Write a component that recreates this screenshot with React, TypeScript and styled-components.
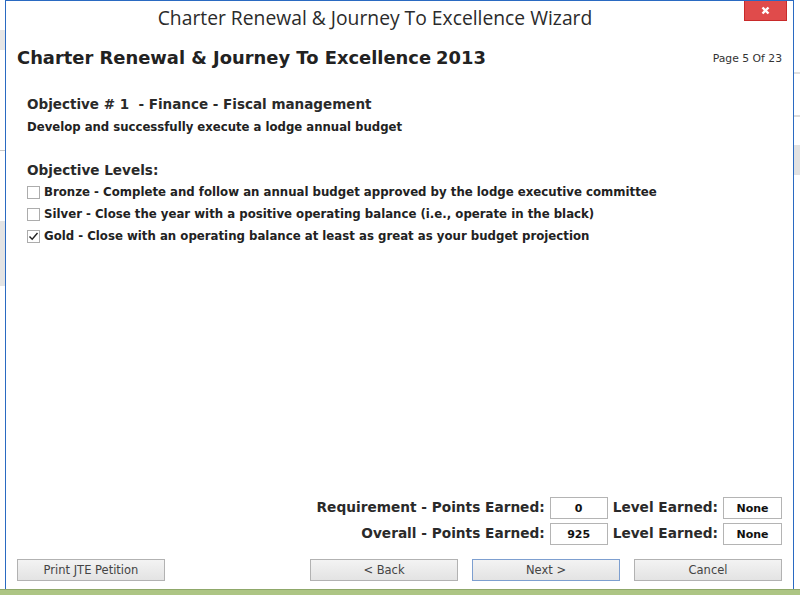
import React from "react";
import styled, { createGlobalStyle } from "styled-components";

const Global = createGlobalStyle`
  html, body { margin: 0; padding: 0; background: #ffffff; }
  body { font-family: "DejaVu Sans", Verdana, sans-serif; color: #222; }
  * { box-sizing: border-box; }
`;

const Screen = styled.div`
  width: 800px;
  height: 595px;
  display: flex;
  flex-direction: column;
  overflow: hidden;
`;

const Desk = styled.div`
  flex: 1;
  display: flex;
  min-height: 0;
`;

const Backdrop = styled.div<{ $w: number }>`
  width: ${(p) => p.$w}px;
  display: flex;
  flex-direction: column;
  background: #fff;
`;

const BackBand = styled.div<{ $h: number; $c: string }>`
  height: ${(p) => p.$h}px;
  background: ${(p) => p.$c};
`;

const Taskbar = styled.div`
  height: 6px;
  background: #adc584;
  border-top: 1px solid #8fa86a;
`;

const Window = styled.div`
  flex: 1;
  display: flex;
  flex-direction: column;
  background: #fff;
  border: 1px solid #2a6ac2;
  border-bottom: none;
`;

const TitleBar = styled.div`
  height: 37px;
  display: flex;
  align-items: flex-start;
  padding-right: 6px;
`;

const TitleText = styled.div`
  flex: 1;
  text-align: center;
  font-family: "Open Sans", "Noto Sans", sans-serif;
  font-size: 19.3px;
  line-height: 22px;
  padding-top: 6px;
  color: #2b2b2b;
`;

const CloseButton = styled.div`
  width: 43px;
  height: 20px;
  background: #e04b4b;
  border: 1px solid #c82a2a;
  border-top: none;
  display: flex;
  align-items: center;
  justify-content: center;
`;

const HeadRow = styled.div`
  height: 39px;
  display: flex;
  align-items: center;
  justify-content: space-between;
  padding: 0 11px;
`;

const Heading = styled.div`
  font-size: 17.9px;
  font-weight: bold;
  color: #222;
  display: flex;
  gap: 5px;
`;

const PageLabel = styled.div`
  font-size: 10.8px;
  color: #333;
  padding-top: 2px;
`;

const Content = styled.div`
  padding: 17px 21px 0;
  display: flex;
  flex-direction: column;
`;

const ObjectiveTitle = styled.div`
  font-size: 13.5px;
  font-weight: bold;
  line-height: 20px;
  color: #2a2a2a;
  white-space: pre;
`;

const Description = styled.div`
  font-size: 11.7px;
  font-weight: bold;
  line-height: 18px;
  margin-top: 4px;
  color: #222;
`;

const LevelsHeader = styled.div`
  font-size: 13.6px;
  font-weight: bold;
  line-height: 20px;
  margin-top: 24px;
  color: #2a2a2a;
`;

const LevelList = styled.div`
  display: flex;
  flex-direction: column;
  margin-top: 1px;
`;

const LevelRow = styled.label`
  height: 22px;
  display: flex;
  align-items: center;
  gap: 4px;
  font-size: 11.75px;
  font-weight: bold;
  color: #222;
`;

const Box = styled.span`
  width: 13px;
  height: 13px;
  border: 1px solid #acacac;
  background: #fff;
  display: inline-flex;
  align-items: center;
  justify-content: center;
`;

const Spacer = styled.div`
  flex: 1;
`;

const Scores = styled.div`
  display: grid;
  grid-template-columns: auto 58px auto 59px;
  grid-auto-rows: 22px;
  justify-content: end;
  align-items: center;
  column-gap: 5px;
  row-gap: 4px;
  padding-right: 11px;
`;

const ScoreLabel = styled.div`
  font-size: 13.7px;
  font-weight: bold;
  color: #2a2a2a;
  text-align: right;
  padding-bottom: 2px;
`;

const ScoreBox = styled.div`
  height: 22px;
  border: 1px solid #b4b4b4;
  background: #fff;
  font-size: 11px;
  font-weight: bold;
  display: flex;
  align-items: center;
  justify-content: center;
  padding-top: 1px;
  color: #111;
`;

const ButtonRow = styled.div`
  display: flex;
  align-items: center;
  padding: 14px 11px 8px;
  gap: 14px;
`;

const Button = styled.div<{ $focus?: boolean }>`
  width: 148px;
  height: 22px;
  border: 1px solid ${(p) => (p.$focus ? "#7d9fd0" : "#b2b2b2")};
  background: linear-gradient(#f3f3f3, #e3e3e3);
  font-size: 11.5px;
  color: #444;
  display: flex;
  align-items: center;
  justify-content: center;
`;

const Check = () => (
  <svg width="11" height="11" viewBox="0 0 11 11">
    <path d="M1.5 5.5 L4.2 8.3 L9.5 2" fill="none" stroke="#222" strokeWidth="1.4" />
  </svg>
);

const levels = [
  { text: "Bronze - Complete and follow an annual budget approved by the lodge executive committee", checked: false },
  { text: "Silver - Close the year with a positive operating balance (i.e., operate in the black)", checked: false },
  { text: "Gold - Close with an operating balance at least as great as your budget projection", checked: true },
];

export default function App() {
  return (
    <Screen>
      <Global />
      <Desk>
        <Backdrop $w={5}>
          <BackBand $h={30} $c="#fff" />
          <BackBand $h={20} $c="#e6e6e6" />
          <BackBand $h={100} $c="#fff" />
          <BackBand $h={1} $c="#c8c8c8" />
          <BackBand $h={70} $c="#fff" />
          <BackBand $h={65} $c="#e4e4e4" />
        </Backdrop>
        <Window>
          <TitleBar>
            <TitleText>Charter Renewal &amp; Journey To Excellence Wizard</TitleText>
            <CloseButton>
              <svg width="9" height="9" viewBox="0 0 9 9">
                <path d="M1.5 1.5 L7.5 7.5 M7.5 1.5 L1.5 7.5" stroke="#fff" strokeWidth="2.4" />
              </svg>
            </CloseButton>
          </TitleBar>
          <HeadRow>
            <Heading>
              <span>Charter Renewal &amp; Journey To Excellence</span>
              <span>2013</span>
            </Heading>
            <PageLabel>Page 5 Of 23</PageLabel>
          </HeadRow>
          <Content>
            <ObjectiveTitle>Objective # 1  - Finance - Fiscal management</ObjectiveTitle>
            <Description>Develop and successfully execute a lodge annual budget</Description>
            <LevelsHeader>Objective Levels:</LevelsHeader>
            <LevelList>
              {levels.map((l) => (
                <LevelRow key={l.text}>
                  <Box>{l.checked && <Check />}</Box>
                  <span>{l.text}</span>
                </LevelRow>
              ))}
            </LevelList>
          </Content>
          <Spacer />
          <Scores>
            <ScoreLabel>Requirement - Points Earned:</ScoreLabel>
            <ScoreBox>0</ScoreBox>
            <ScoreLabel>Level Earned:</ScoreLabel>
            <ScoreBox>None</ScoreBox>
            <ScoreLabel>Overall - Points Earned:</ScoreLabel>
            <ScoreBox>925</ScoreBox>
            <ScoreLabel>Level Earned:</ScoreLabel>
            <ScoreBox>None</ScoreBox>
          </Scores>
          <ButtonRow>
            <Button>Print JTE Petition</Button>
            <Spacer />
            <Button>&lt; Back</Button>
            <Button $focus>Next &gt;</Button>
            <Button>Cancel</Button>
          </ButtonRow>
        </Window>
        <Backdrop $w={6}>
          <BackBand $h={72} $c="#fff" />
          <BackBand $h={2} $c="#e0e0e0" />
          <BackBand $h={41} $c="#fff" />
          <BackBand $h={2} $c="#dcdcdc" />
          <BackBand $h={28} $c="#fff" />
          <BackBand $h={30} $c="#e2e2e2" />
        </Backdrop>
      </Desk>
      <Taskbar />
    </Screen>
  );
}
